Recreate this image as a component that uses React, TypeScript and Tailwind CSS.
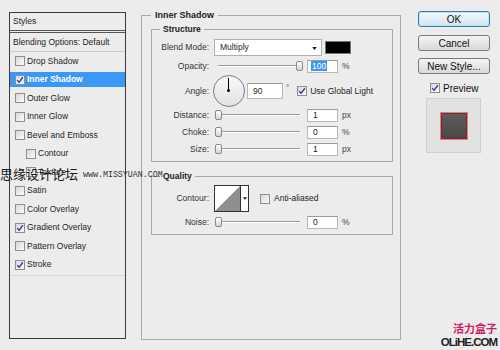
import React from "react";

function Check({ checked }: { checked?: boolean }) {
  return (
    <span className="flex h-[10px] w-[10px] shrink-0 items-center justify-center border border-[#8f8f8f] bg-linear-to-br from-[#d8d8d8] to-[#fbfbfb]">
      {checked && (
        <svg viewBox="0 0 10 10" className="h-[8px] w-[8px]">
          <path d="M1.5 5.2 L4 7.8 L8.6 1.6" fill="none" stroke="#2b4588" strokeWidth="1.7" />
        </svg>
      )}
    </span>
  );
}

function Slider({ pct }: { pct: number }) {
  return (
    <div className="relative ml-[5px] h-[12px] w-[90px]">
      <div className="absolute left-[4px] right-[4px] top-[5px] h-[2px] border-t border-[#9c9c9c] bg-white" />
      <div
        className="absolute top-[1px] h-[10px] w-[7px] rounded-[2px] border border-[#8a8a8a] bg-linear-to-b from-white to-[#d4d4d4]"
        style={{ left: `${1 + pct * 0.81}px` }}
      />
    </div>
  );
}

function Field({ children, w = "w-[31px]" }: { children: React.ReactNode; w?: string }) {
  return (
    <div className={`ml-[3px] flex h-[13px] ${w} items-center border border-[#b8b8b8] border-t-[#9a9a9a] bg-white pl-[5px] text-[8.5px] text-[#222]`}>
      {children}
    </div>
  );
}

function Label({ children }: { children: React.ReactNode }) {
  return <div className="w-[57px] shrink-0 text-right text-[8.5px] text-[#333]">{children}</div>;
}

function SliderRow({ label, pct, value, unit, mt }: { label: string; pct: number; value: React.ReactNode; unit: string; mt: string }) {
  return (
    <div className={`flex h-[14px] items-center ${mt}`}>
      <Label>{label}</Label>
      <Slider pct={pct} />
      <Field>{value}</Field>
      <span className="ml-[4px] text-[8.5px] text-[#444]">{unit}</span>
    </div>
  );
}

const items: { label: string; checked?: boolean; active?: boolean; indent?: boolean }[] = [
  { label: "Drop Shadow" },
  { label: "Inner Shadow", checked: true, active: true },
  { label: "Outer Glow" },
  { label: "Inner Glow" },
  { label: "Bevel and Emboss" },
  { label: "Contour", indent: true },
  { label: "Texture", indent: true },
  { label: "Satin" },
  { label: "Color Overlay" },
  { label: "Gradient Overlay", checked: true },
  { label: "Pattern Overlay" },
  { label: "Stroke", checked: true },
];

export default function App() {
  return (
    <div className="relative flex h-[350px] w-[500px] overflow-hidden bg-[#ececec] font-['Liberation_Sans','Noto_Sans_CJK_SC',sans-serif] text-[#1e1e1e]">
      {/* Left styles list */}
      <div className="ml-[9px] mt-[12px] flex h-[327px] w-[117px] flex-col border border-[#3a3a3a]">
        <div className="flex h-[18px] shrink-0 items-center border-b border-[#555] pl-[3px] text-[8.5px]">Styles</div>
        <div className="h-[1px] shrink-0" />
        <div className="flex h-[20px] shrink-0 items-center border-y border-t-[#555] border-b-[#c9c9c9] pl-[3px] text-[8.5px]">
          Blending Options: Default
        </div>
        {items.map((it) => (
          <div key={it.label} className="flex h-[18.5px] shrink-0 items-center">
            <div
              className={`flex h-[15px] w-full items-center ${it.indent ? "pl-[16px]" : "pl-[5px]"} ${
                it.active ? "bg-[#3b98f5] font-bold text-white" : ""
              }`}
            >
              <Check checked={it.checked} />
              <span className="ml-[2px] text-[8.5px]">{it.label}</span>
            </div>
          </div>
        ))}
        <div className="mt-[1px] h-[1px] bg-[#d8d8d8]" />
      </div>

      {/* Center settings */}
      <fieldset className="ml-[15px] mt-[10px] h-[330px] w-[260px] shrink-0 border border-[#a9a9a9] pl-[9px]">
        <legend className="px-[4px] text-[9px] font-bold leading-[10px] text-[#222]">Inner Shadow</legend>
        <fieldset className="mt-[4px] h-[138px] w-[242px] border border-[#a9a9a9]">
          <legend className="ml-[8px] px-[3px] text-[8.5px] font-bold leading-[10px] text-[#222]">Structure</legend>
          <div className="mt-[5px] flex h-[17px] items-center">
            <Label>Blend Mode:</Label>
            <div className="relative ml-[5px] flex h-[17px] w-[108px] items-center border border-[#b0b0b0] bg-white pl-[5px] text-[8.5px]">
              Multiply
              <svg viewBox="0 0 6 4" className="absolute right-[4px] top-[7px] h-[3px] w-[5px]">
                <path d="M0 0 L6 0 L3 4 Z" fill="#111" />
              </svg>
            </div>
            <div className="ml-[3px] h-[13px] w-[26px] border border-[#777] bg-black" />
          </div>
          <SliderRow
            label="Opacity:"
            pct={100}
            mt="mt-[3px]"
            unit="%"
            value={<span className="-ml-[2px] bg-[#3b98f5] px-[1px] leading-[10px] text-white">100</span>}
          />
          <div className="mt-[2px] flex h-[32px] items-center">
            <Label>Angle:</Label>
            <div className="relative ml-[4px] h-[32px] w-[32px] shrink-0 rounded-full border-[1.5px] border-[#6f8193] bg-linear-to-b from-[#f8f8f8] to-[#e2e2e2]">
              <div className="absolute left-[14px] top-[2px] h-[13px] w-[1px] bg-black" />
              <div className="absolute left-[13px] top-[13px] h-[3px] w-[3px] rounded-full bg-black" />
            </div>
            <div className="ml-[2px] flex h-[16px] w-[36px] items-center border border-[#b8b8b8] border-t-[#9a9a9a] bg-white pl-[5px] text-[8.5px]">
              90
            </div>
            <span className="ml-[3px] -mt-[6px] text-[8px] text-[#444]">°</span>
            <span className="ml-[8px]">
              <Check checked />
            </span>
            <span className="ml-[3px] text-[8.5px] text-[#222]">Use Global Light</span>
          </div>
          <SliderRow label="Distance:" pct={0} mt="mt-[1px]" unit="px" value="1" />
          <SliderRow label="Choke:" pct={0} mt="mt-[3px]" unit="%" value="0" />
          <SliderRow label="Size:" pct={0} mt="mt-[3px]" unit="px" value="1" />
        </fieldset>

        <fieldset className="mt-[9px] h-[64px] w-[242px] border border-[#a9a9a9]">
          <legend className="ml-[8px] px-[3px] text-[8.5px] font-bold leading-[10px] text-[#222]">Quality</legend>
          <div className="mt-[4px] flex h-[27px] items-center">
            <Label>Contour:</Label>
            <div className="ml-[5px] flex h-[27px] w-[35px] shrink-0 border border-[#333] bg-white">
              <svg viewBox="0 0 25 25" className="h-full w-[25px]" preserveAspectRatio="none">
                <path d="M0 25 L25 0 L25 25 Z" fill="#8e8e8e" />
              </svg>
              <div className="flex flex-1 items-center justify-center border-l border-[#333]">
                <svg viewBox="0 0 6 4" className="h-[3px] w-[4px]">
                  <path d="M0 0 L6 0 L3 4 Z" fill="#111" />
                </svg>
              </div>
            </div>
            <span className="ml-[11px]">
              <Check />
            </span>
            <span className="ml-[4px] text-[8.5px] text-[#222]">Anti-aliased</span>
          </div>
          <SliderRow label="Noise:" pct={0} mt="mt-[3px]" unit="%" value="0" />
        </fieldset>
      </fieldset>

      {/* Right buttons */}
      <div className="ml-[17px] flex w-[72px] shrink-0 flex-col pt-[11px]">
        <button className="flex h-[16px] w-[72px] items-center justify-center rounded-[3px] border border-[#3d7ba6] bg-linear-to-b from-[#f3f9fc] to-[#d3e5ee] text-[10px] text-[#111] shadow-[inset_0_0_0_1px_#b8e6f8]">
          OK
        </button>
        <button className="mt-[8px] flex h-[16px] w-[72px] items-center justify-center rounded-[3px] border border-[#7a7a7a] bg-linear-to-b from-[#f4f4f4] to-[#d9d9d9] text-[10px] text-[#111]">
          Cancel
        </button>
        <button className="mt-[7px] flex h-[16px] w-[72px] items-center justify-center rounded-[3px] border border-[#7a7a7a] bg-linear-to-b from-[#f4f4f4] to-[#d9d9d9] text-[10px] text-[#111]">
          New Style...
        </button>
        <div className="ml-[12px] mt-[9px] flex h-[10px] items-center">
          <Check checked />
          <span className="ml-[3px] text-[10px] text-[#111]">Preview</span>
        </div>
        <div className="ml-[8px] mt-[5px] flex h-[55px] w-[55px] items-center justify-center border border-[#d0d0d0] bg-[#e2e2e2]">
          <div className="h-[28px] w-[28px] border-[1.5px] border-[#e07c86] bg-linear-to-b from-[#5e5e5e] to-[#474747] shadow-[inset_0_0_0_1px_#7a2a33]" />
        </div>
      </div>

      {/* Watermark overlay */}
      <div className="absolute left-0 top-[167px] flex items-center whitespace-nowrap leading-[16px] text-[#1a1a1a]">
        <span className="text-[13px]">思缘设计论坛</span>
        <span className="ml-[5px] font-['Liberation_Mono',monospace] text-[8.3px] text-[#333]">www.MISSYUAN.COM</span>
      </div>

      {/* Logo overlay */}
      <div className="absolute bottom-[2px] right-[3px] flex flex-col items-end">
        <span className="text-[11px] font-bold leading-[13px] text-[#d31a63]">活力盒子</span>
        <span className="text-[11.5px] font-bold leading-[12px] tracking-[-1px] text-[#222]">OLiHE.COM</span>
      </div>
    </div>
  );
}
